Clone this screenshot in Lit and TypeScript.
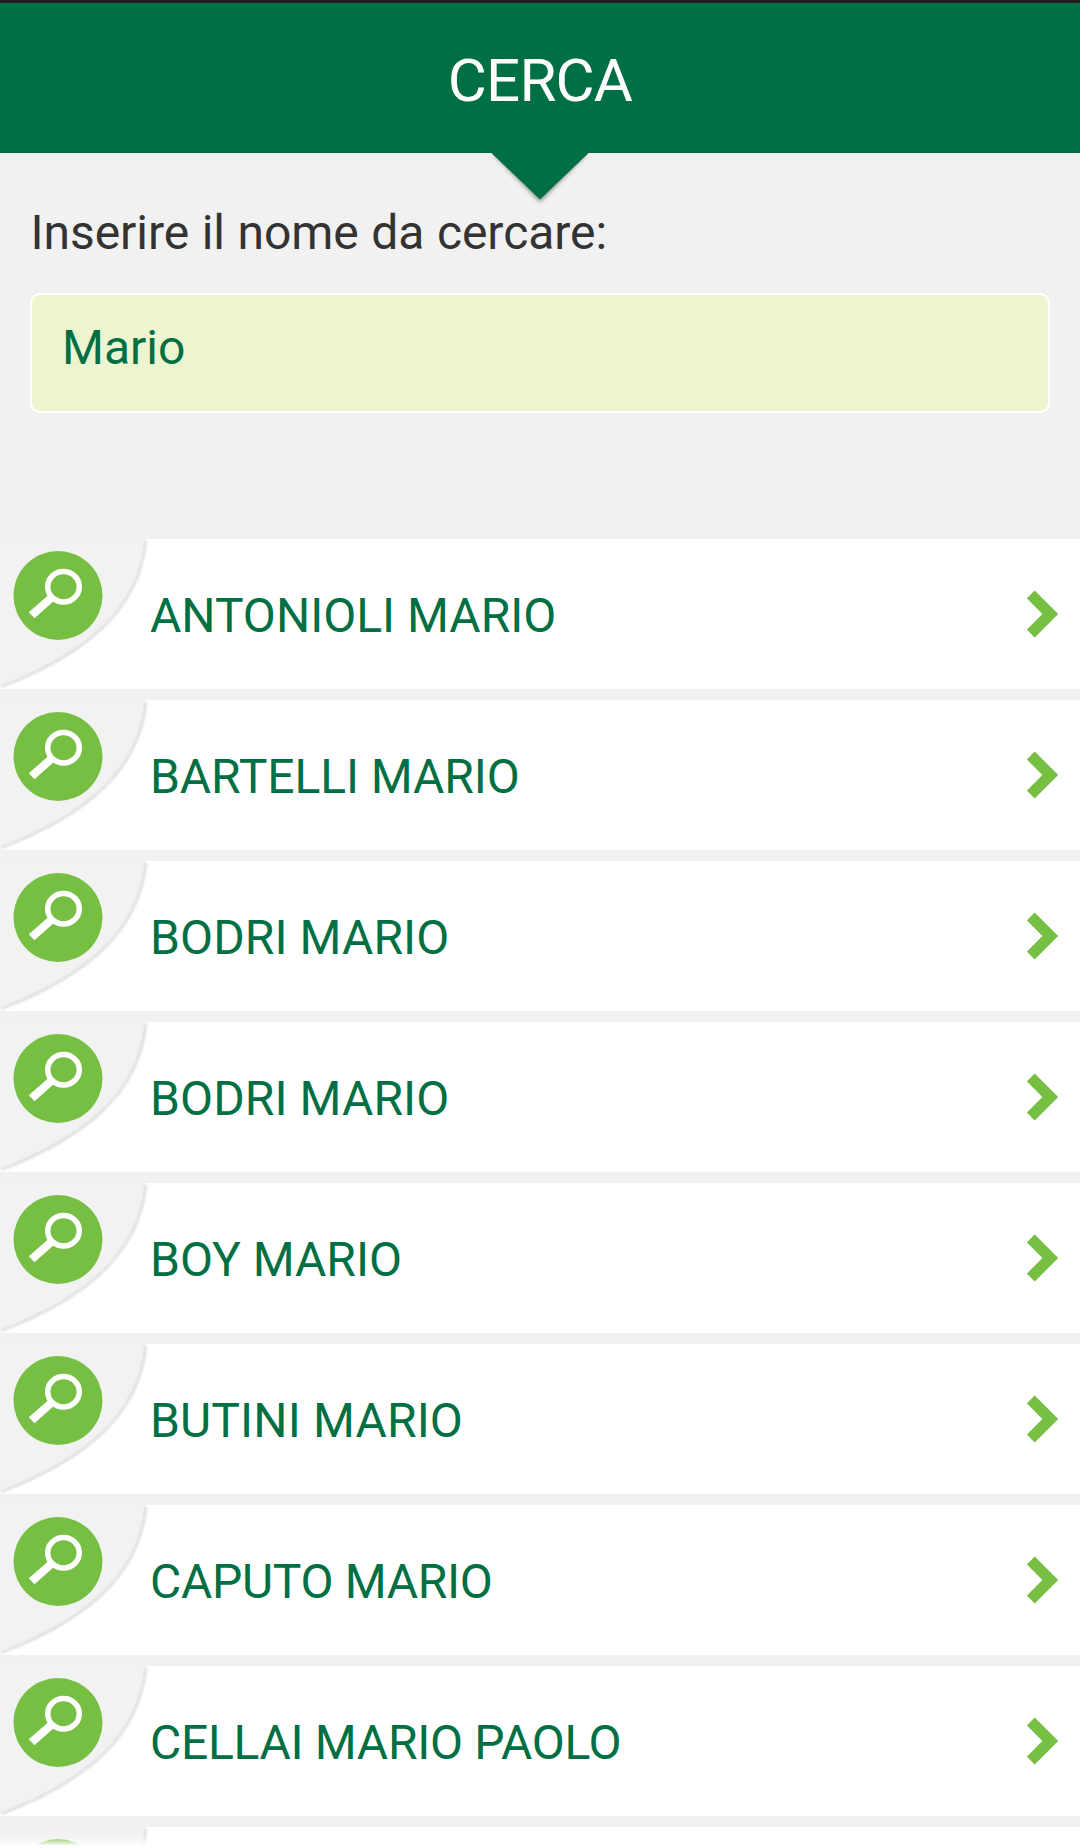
import { html, css, LitElement } from "lit";
import { customElement, property, state } from "lit/decorators.js";
import { styleMap } from "lit/directives/style-map.js";

interface Person {
	name: string;
	/* letter-spacing in px */
	tracking: number;
}

@customElement("result-row")
export class ResultRow extends LitElement {
	static styles = css`
		:host {
			display: flex;
			align-items: center;
			height: 150px;
			background: #fff;
			color: #006f43;
			flex-shrink: 0;
		}

		.corner {
			width: 150px;
			height: 150px;
			flex-shrink: 0;
		}

		.name {
			flex: 1;
			font-size: 48px;
			line-height: 56px;
			padding-top: 3px;
			white-space: nowrap;
		}

		.chevron {
			width: 32px;
			height: 48px;
			margin-right: 21px;
			flex-shrink: 0;
		}
	`;

	@property() name = "";
	@property({ type: Number }) tracking = 0;

	render() {
		return html`
			<svg class="corner" viewBox="0 0 150 150">
				<defs>
					<filter id="edge"><feGaussianBlur stdDeviation="1" /></filter>
				</defs>
				<path d="M0 0H146C139 69 87 114 0 147.500Z" fill="#f2f2f2" />
				<path d="M146 2C139 70 88 114.500 1 148" fill="none" stroke="#dadada" stroke-width="2.400" filter="url(#edge)" />
				<circle cx="58" cy="56.500" r="44.500" fill="#76bf43" />
				<ellipse cx="63.500" cy="47.700" rx="15.800" ry="15.200" fill="none" stroke="#fff" stroke-width="5.500" />
				<path d="M28.800 73.300L48.500 56L53.900 62L34.500 79.300Z" fill="#fff" />
			</svg>
			<span class="name" style=${styleMap({ letterSpacing: `${this.tracking}px` })}>${this.name}</span>
			<svg class="chevron" viewBox="0 0 32 48">
				<path d="M7.700 0.500L31.200 24L7.700 47.500L-0.200 39.600L15.400 24L-0.200 8.400Z" fill="#76bf43" />
			</svg>
		`;
	}
}

@customElement("app-root")
export class AppRoot extends LitElement {
	static styles = css`
		:host {
			display: flex;
			flex-direction: column;
			position: relative;
			height: 1848px;
			overflow: hidden;
			background: #f1f1f1;
			font-family: Roboto, sans-serif;
		}

		.header {
			position: relative;
			box-sizing: border-box;
			height: 153px;
			flex-shrink: 0;
			border-top: 3px solid #231f20;
			background: #006f43;
			color: #fff;
			text-align: center;
		}

		.title {
			margin: 0;
			padding-top: 43px;
			font-size: 60px;
			line-height: 70px;
			font-weight: 400;
			letter-spacing: -0.8px;
		}

		.pointer {
			position: absolute;
			top: 150px;
			left: 50%;
			width: 108px;
			height: 56px;
			margin-left: -54px;
		}

		.search {
			display: flex;
			flex-direction: column;
			box-sizing: border-box;
			height: 386px;
			flex-shrink: 0;
			padding: 52px 30px 0;
		}

		.label {
			font-size: 48px;
			line-height: 56px;
			letter-spacing: -0.05px;
			word-spacing: 0.7px;
			padding-left: 0.5px;
			color: #333;
			white-space: nowrap;
		}

		.field {
			box-sizing: border-box;
			height: 120px;
			margin-top: 32px;
			padding: 24px 30px 36px;
			border: 2px solid #fff;
			border-radius: 10px;
			background: #edf4d0;
			color: #006f43;
			font-family: inherit;
			font-size: 48px;
			line-height: 56px;
			outline: none;
		}

		.results {
			display: flex;
			flex-direction: column;
			gap: 11px;
		}

		.fade {
			position: absolute;
			left: 0;
			right: 0;
			bottom: 0;
			height: 12px;
			background: linear-gradient(rgba(255, 255, 255, 0), #fff 80%);
		}
	`;

	@state() query = "Mario";

	people: Person[] = [
		{ name: "ANTONIOLI MARIO", tracking: 0 },
		{ name: "BARTELLI MARIO", tracking: -0.08 },
		{ name: "BODRI MARIO", tracking: 0.1 },
		{ name: "BODRI MARIO", tracking: 0.1 },
		{ name: "BOY MARIO", tracking: 0 },
		{ name: "BUTINI MARIO", tracking: 0.15 },
		{ name: "CAPUTO MARIO", tracking: -0.3 },
		{ name: "CELLAI MARIO PAOLO", tracking: -0.3 },
		{ name: "", tracking: 0 },
	];

	render() {
		return html`
			<header class="header">
				<h1 class="title">CERCA</h1>
				<svg class="pointer" viewBox="0 0 108 56">
					<defs>
						<filter id="soft"><feGaussianBlur stdDeviation="2" /></filter>
					</defs>
					<path d="M6 0H102L54 49Z" fill="#000" opacity="0.4" filter="url(#soft)" />
					<path d="M5.500 0H102.500L54 46.500Z" fill="#006f43" />
				</svg>
			</header>
			<section class="search">
				<label class="label" for="query">Inserire il nome da cercare:</label>
				<input
					id="query"
					class="field"
					.value=${this.query}
					@input=${(e: InputEvent) => { this.query = (e.target as HTMLInputElement).value; }}
				/>
			</section>
			<main class="results">
				${this.people.map((p) => html`<result-row .name=${p.name} .tracking=${p.tracking}></result-row>`)}
			</main>
			<div class="fade"></div>
		`;
	}
}
